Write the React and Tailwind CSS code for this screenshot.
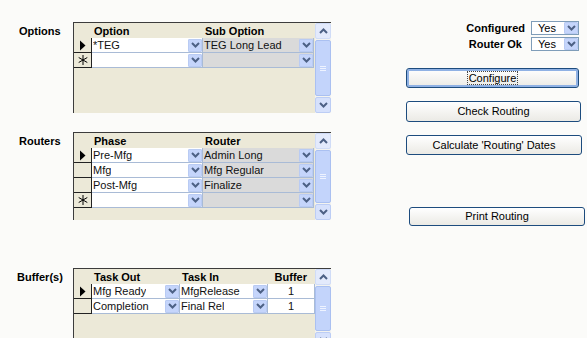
import React from 'react';

const font = "font-['Liberation_Sans','Arial',sans-serif]";

const Chevron = ({ up = false, className = '' }) => (
  <svg width="9" height="6" viewBox="0 0 9 6" className={className}>
    <path
      d={up ? 'M1 5 L4.5 1.5 L8 5' : 'M1 1 L4.5 4.5 L8 1'}
      fill="none"
      stroke="#4d6185"
      strokeWidth="2"
    />
  </svg>
);

const DropButton = () => (
  <div className="w-[14px] h-[13px] shrink-0 flex items-center justify-center bg-[#c5d5fb] border border-[#b9cbf3] rounded-[1px]">
    <Chevron />
  </div>
);

const Arrow = () => (
  <svg width="7" height="11" viewBox="0 0 7 11">
    <path d="M1 0.5 L6.5 5.5 L1 10.5 Z" fill="#000" />
  </svg>
);

const Star = () => (
  <svg width="10" height="10" viewBox="0 0 10 10">
    <path d="M5 0 V10 M0.7 2.5 L9.3 7.5 M9.3 2.5 L0.7 7.5" stroke="#000" strokeWidth="1" />
  </svg>
);

const ScrollBar = () => (
  <div className="w-[16px] h-full flex flex-col ml-auto bg-[#f3f3ef]">
    <div className="h-[16px] flex items-center justify-center bg-[#e3eafc] border border-[#d0dcf7] rounded-[2px]">
      <Chevron up />
    </div>
    <div className="flex-1 my-[1px] bg-[#c3d4fb] border border-[#aac0f1] rounded-[2px] flex flex-col items-center justify-center gap-[1px]">
      <div className="w-[6px] h-[1px] bg-[#eef3ff]" />
      <div className="w-[6px] h-[1px] bg-[#eef3ff]" />
      <div className="w-[6px] h-[1px] bg-[#eef3ff]" />
    </div>
    <div className="h-[16px] flex items-center justify-center bg-[#d6e1fc] border border-[#bccdf5] rounded-[2px]">
      <Chevron />
    </div>
  </div>
);

const DataGrid = ({ columns, rows, height }) => (
  <div
    className="w-[258px] flex bg-[#ece9d8] border-l border-t border-[#3c3c3c] overflow-hidden"
    style={{ height }}
  >
    <div className="flex flex-col">
      <div className="h-[15px] flex items-center text-[11px] leading-[14px] font-bold text-black">
        <div className="w-[18px] shrink-0" />
        {columns.map((c) => (
          <div
            key={c.label}
            className={c.align === 'center' ? 'pr-[8px] text-right' : 'pl-[2px]'}
            style={{ width: c.width }}
          >
            {c.label}
          </div>
        ))}
      </div>
      {rows.map((r, i) => (
        <div key={i} className="h-[15px] flex text-[11px] text-[#111]">
          <div className="w-[18px] shrink-0 flex items-center justify-center border-r border-b border-[#222] bg-[#ece9d8]">
            {r.current && <Arrow />}
            {r.isNew && <Star />}
          </div>
          {columns.map((c, j) => (
            <div
              key={j}
              className={
                'flex items-center border-r border-b border-[#a9bbd6] ' +
                (c.grey ? 'bg-[#dadada]' : 'bg-white') +
                (c.align === 'center' ? ' justify-center' : ' justify-between pl-[1px]')
              }
              style={{ width: c.width }}
            >
              <span className="leading-[13px] truncate">{r.cells[j]}</span>
              {c.drop && <DropButton />}
            </div>
          ))}
        </div>
      ))}
    </div>
    <ScrollBar />
  </div>
);

const XpButton = ({ children, width, height, focused, className = '' }) => (
  <button
    className={
      'flex items-center justify-center rounded-[3px] border border-[#1d4c7e] bg-gradient-to-b from-[#ffffff] to-[#ebeae5] text-[11px] leading-[13px] text-black ' +
      (focused ? 'shadow-[inset_0_0_0_2px_#8fb1e4] ' : '') +
      className
    }
    style={{ width, height }}
  >
    <span className={focused ? 'border border-dotted border-[#444] px-[1px] leading-[12px]' : ''}>{children}</span>
  </button>
);

const YesSelect = () => (
  <div className="w-[48px] h-[14px] flex items-center justify-between bg-white border border-[#7f9db9] pl-[6px] text-[11px] text-black">
    <span className="leading-[12px]">Yes</span>
    <div className="w-[14px] h-[12px] flex items-center justify-center bg-[#c5d5fb] border border-[#b9cbf3] rounded-[1px]">
      <Chevron />
    </div>
  </div>
);

export default function App() {
  return (
    <div className={`w-[587px] h-[338px] flex bg-[#fbfbf9] overflow-hidden ${font}`}>
      <div className="w-[340px] flex flex-col">
        <div className="flex mt-[22px]">
          <div className="w-[73px] pl-[19px] pt-[2px] text-[11px] leading-[14px] font-bold">Options</div>
          <DataGrid
            height={91}
            columns={[
              { label: 'Option', width: 111, drop: true },
              { label: 'Sub Option', width: 111, drop: true, grey: true },
            ]}
            rows={[
              { current: true, cells: ['*TEG', 'TEG Long Lead'] },
              { isNew: true, cells: ['', ''] },
            ]}
          />
        </div>
        <div className="flex mt-[19px]">
          <div className="w-[73px] pl-[19px] pt-[2px] text-[11px] leading-[14px] font-bold">Routers</div>
          <DataGrid
            height={88}
            columns={[
              { label: 'Phase', width: 111, drop: true },
              { label: 'Router', width: 111, drop: true, grey: true },
            ]}
            rows={[
              { current: true, cells: ['Pre-Mfg', 'Admin Long'] },
              { cells: ['Mfg', 'Mfg Regular'] },
              { cells: ['Post-Mfg', 'Finalize'] },
              { isNew: true, cells: ['', ''] },
            ]}
          />
        </div>
        <div className="flex mt-[48px]">
          <div className="w-[73px] pl-[17px] pt-[2px] text-[11px] leading-[14px] font-bold">Buffer(s)</div>
          <DataGrid
            height={80}
            columns={[
              { label: 'Task Out', width: 88, drop: true },
              { label: 'Task In', width: 88, drop: true },
              { label: 'Buffer', width: 47, align: 'center' },
            ]}
            rows={[
              { current: true, cells: ['Mfg Ready', 'MfgRelease', '1'] },
              { cells: ['Completion', 'Final Rel', '1'] },
            ]}
          />
        </div>
      </div>
      <div className="flex-1 flex flex-col pt-[21px] text-[11px] leading-[14px]">
        <div className="h-[14px] flex items-center justify-end gap-[6px] pr-[8px]">
          <span className="font-bold">Configured</span>
          <YesSelect />
        </div>
        <div className="h-[14px] flex items-center justify-end gap-[9px] pr-[8px] mt-[2px]">
          <span className="font-bold">Router Ok</span>
          <YesSelect />
        </div>
        <XpButton width={173} height={20} focused className="ml-[66px] mt-[17px]">
          Configure
        </XpButton>
        <XpButton width={175} height={21} className="ml-[66px] mt-[13px]">
          Check Routing
        </XpButton>
        <XpButton width={176} height={20} className="ml-[66px] mt-[13px]">
          Calculate 'Routing' Dates
        </XpButton>
        <XpButton width={176} height={19} className="ml-[69px] mt-[52px]">
          Print Routing
        </XpButton>
      </div>
    </div>
  );
}
